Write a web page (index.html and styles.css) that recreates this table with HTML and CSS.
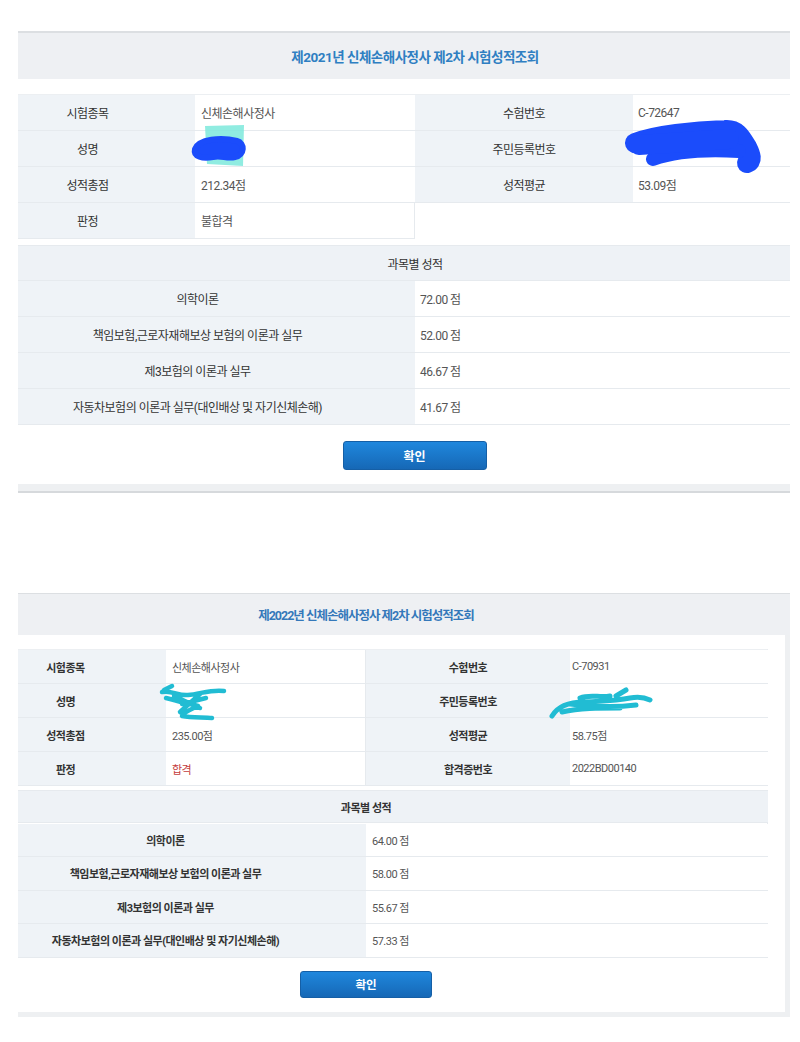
FILE: index.html
```html
<!DOCTYPE html>
<html lang="ko">
<head>
<meta charset="utf-8">
<title>시험성적조회</title>
<link rel="stylesheet" href="styles.css">
</head>
<body>
<div class="page">

  <section class="panel p1">
    <h2 class="panel-title">제2021년 신체손해사정사 제2차 시험성적조회</h2>
    <div class="panel-body">
      <div class="info">
        <div class="lbl first">시험종목</div>
        <div class="val">신체손해사정사</div>
        <div class="lbl">수험번호</div>
        <div class="val">C-72647</div>

        <div class="lbl first">성명</div>
        <div class="val mask">
          <svg class="scrib" width="70" height="50" viewBox="0 0 70 50">
            <polygon points="18,1 57,0 56,41 20,39" fill="#7ce9dc" opacity="0.85"/>
            <path d="M8 24 C 12 14, 34 12, 50 16 C 58 18, 58 30, 48 32 C 40 34, 34 30, 26 32 C 16 34, 6 32, 8 24 Z" fill="#1b4cfb" stroke="#1b4cfb" stroke-width="6" stroke-linejoin="round"/>
          </svg>
        </div>
        <div class="lbl">주민등록번호</div>
        <div class="val mask">
          <svg class="scrib wide" width="150" height="60" viewBox="0 0 150 60">
            <path d="M10 22 C 30 14, 70 10, 100 9 C 112 8, 116 16, 122 26 C 126 34, 128 40, 122 42" fill="none" stroke="#1b4cfb" stroke-width="20" stroke-linecap="round" stroke-linejoin="round"/>
            <path d="M28 38 C 50 30, 80 28, 114 30" fill="none" stroke="#1b4cfb" stroke-width="14" stroke-linecap="round"/>
            <path d="M14 24 L 104 18" fill="none" stroke="#1b4cfb" stroke-width="20" stroke-linecap="round"/>
          </svg>
        </div>

        <div class="lbl first">성적총점</div>
        <div class="val">212.34점</div>
        <div class="lbl">성적평균</div>
        <div class="val">53.09점</div>

        <div class="lbl first">판정</div>
        <div class="val last">불합격</div>
        <div class="empty"></div>
      </div>

      <div class="subjects">
        <div class="sub-head">과목별 성적</div>
        <div class="lbl">의학이론</div>
        <div class="val">72.00 점</div>
        <div class="lbl">책임보험,근로자재해보상 보험의 이론과 실무</div>
        <div class="val">52.00 점</div>
        <div class="lbl">제3보험의 이론과 실무</div>
        <div class="val">46.67 점</div>
        <div class="lbl">자동차보험의 이론과 실무(대인배상 및 자기신체손해)</div>
        <div class="val">41.67 점</div>
      </div>

      <div class="actions">
        <button class="btn" type="button">확인</button>
      </div>
    </div>
  </section>

  <section class="panel p2">
    <h2 class="panel-title">제2022년 신체손해사정사 제2차 시험성적조회</h2>
    <div class="panel-body">
      <div class="info">
        <div class="lbl first">시험종목</div>
        <div class="val">신체손해사정사</div>
        <div class="lbl">수험번호</div>
        <div class="val">C-70931</div>

        <div class="lbl first">성명</div>
        <div class="val mask">
          <svg class="scrib s2a" width="80" height="45" viewBox="0 0 80 45">
            <path d="M2 6 C 12 4, 18 10, 28 9 C 40 8, 52 3, 64 5 M6 12 C 20 16, 32 18, 38 20 C 30 24, 24 26, 22 30 C 32 32, 44 31, 52 32 M4 4 L 12 0 M22 18 L 46 12 M14 10 L 40 22 M40 8 L 20 26" fill="none" stroke="#21bcd3" stroke-width="4.5" stroke-linecap="round" stroke-linejoin="round"/>
          </svg>
        </div>
        <div class="lbl">주민등록번호</div>
        <div class="val mask">
          <svg class="scrib s2b" width="120" height="40" viewBox="0 0 120 40">
            <path d="M2 30 C 8 20, 18 16, 34 16 C 50 15, 66 15, 80 12 C 90 10, 96 12, 100 14 M20 18 C 40 20, 60 22, 86 19 M30 12 C 40 8, 50 12, 60 10 M66 10 L 76 4 M12 26 C 30 22, 48 22, 70 22" fill="none" stroke="#21bcd3" stroke-width="5" stroke-linecap="round" stroke-linejoin="round"/>
          </svg>
        </div>

        <div class="lbl first">성적총점</div>
        <div class="val">235.00점</div>
        <div class="lbl">성적평균</div>
        <div class="val">58.75점</div>

        <div class="lbl first">판정</div>
        <div class="val pass">합격</div>
        <div class="lbl">합격증번호</div>
        <div class="val">2022BD00140</div>
      </div>

      <div class="subjects">
        <div class="sub-head">과목별 성적</div>
        <div class="lbl">의학이론</div>
        <div class="val">64.00 점</div>
        <div class="lbl">책임보험,근로자재해보상 보험의 이론과 실무</div>
        <div class="val">58.00 점</div>
        <div class="lbl">제3보험의 이론과 실무</div>
        <div class="val">55.67 점</div>
        <div class="lbl">자동차보험의 이론과 실무(대인배상 및 자기신체손해)</div>
        <div class="val">57.33 점</div>
      </div>

      <div class="actions">
        <button class="btn" type="button">확인</button>
      </div>
    </div>
  </section>

</div>
</body>
</html>
```

FILE: styles.css
```css
* { box-sizing: border-box; }

html, body {
  margin: 0;
  padding: 0;
  background: #ffffff;
}

body {
  font-family: Roboto, "Noto Sans CJK KR", "Noto Sans", sans-serif;
  color: #333;
}

.page {
  padding: 31px 10px 0 18px;
}

.panel {
  width: 772px;
}

.panel-title {
  margin: 0;
  background: #eef0f3;
  border-top: 2px solid #dcdfe2;
  display: flex;
  align-items: center;
  justify-content: center;
  font-weight: 700;
  color: #2f7fc2;
}

/* ---------- panel 1 ---------- */
.p1 .panel-title {
  height: 48px;
  font-size: 13.5px;
  letter-spacing: -0.5px;
  padding-left: 22px;
}

.p1 .panel-body {
  padding-top: 15px;
  border-bottom: 7px solid #eef0f2;
  box-shadow: 0 2px 0 #d6d9dc;
}

.p1 .info {
  display: grid;
  grid-template-columns: 177px 220px 218px 157px;
  grid-auto-rows: 36px;
  border-top: 1px solid #eceff2;
}

.info .lbl,
.info .val,
.subjects .lbl,
.subjects .val,
.sub-head {
  display: flex;
  align-items: center;
  border-bottom: 1px solid #e6eaee;
}

.lbl {
  background: #eff3f7;
  justify-content: center;
  color: #333;
  text-align: center;
}

.val {
  background: #ffffff;
  color: #555;
  padding-left: 6px;
}

.p1 .lbl, .p1 .val {
  font-size: 12px;
  letter-spacing: -0.5px;
}

.p1 .info .lbl.first { padding-right: 38px; }
.p1 .subjects .lbl { padding-right: 38px; }

.p1 .info .val { padding-left: 6px; }
.p1 .info .val:nth-child(4n) { padding-left: 5px; }

.p1 .val.last {
  border-right: 1px solid #e6eaee;
}

.empty {
  background: #fff;
}

.mask {
  position: relative;
}

.scrib {
  position: absolute;
  overflow: visible;
  pointer-events: none;
}

.p1 .mask .scrib { left: -8px; top: -6px; }
.p1 .mask .scrib.wide { left: -8px; top: -10px; }

.sub-head {
  justify-content: center;
  background: #eef2f6;
  color: #333;
}

.p1 .subjects {
  margin-top: 6px;
  display: grid;
  grid-template-columns: 397px 375px;
  grid-auto-rows: 36px;
}

.p1 .sub-head {
  grid-column: 1 / -1;
  font-size: 12px;
  letter-spacing: -0.5px;
  border-top: 1px solid #e6eaee;
  padding-left: 22px;
}

.p1 .subjects .val { padding-left: 5px; }

.actions {
  display: flex;
  justify-content: center;
}

.btn {
  font-family: Roboto, "Noto Sans CJK KR", sans-serif;
  font-weight: 700;
  color: #fff;
  background: linear-gradient(#1f87dd, #1668b6);
  border: 1px solid #155fa6;
  border-radius: 3px;
  cursor: pointer;
}

.p1 .actions {
  padding: 16px 0 14px 21px;
}

.p1 .btn {
  width: 144px;
  height: 29px;
  font-size: 12px;
}

/* ---------- panel 2 ---------- */
.p2 {
  margin-top: 102px;
}

.p2 .panel-title {
  height: 42px;
  font-size: 12.5px;
  letter-spacing: -1px;
  border-top-width: 1px;
  color: #3478ba;
  padding-right: 76px;
}

.p2 .panel-body {
  padding: 14px 17px 0 0;
  border-right: 5px solid #eef0f2;
  border-bottom: 5px solid #eef0f2;
  background: #fff;
}

.p2 .info {
  display: grid;
  grid-template-columns: 148px 200px 204px 198px;
  grid-auto-rows: 34px;
  border-top: 1px solid #eceff2;
  border-right: 1px solid #e6eaee;
}

.p2 .lbl, .p2 .val, .p2 .sub-head {
  font-size: 11px;
  letter-spacing: -0.5px;
}

.p2 .lbl {
  font-weight: 700;
  color: #333;
}

.p2 .info .lbl.first { padding-right: 53px; }
.p2 .subjects .lbl { padding-right: 53px; }

.p2 .info .val { padding-left: 6px; }
.p2 .info .val:nth-child(4n) { padding-left: 2px; }
.p2 .info .val:nth-child(4n+2) { border-right: 1px solid #e6eaee; }

.p2 .val.pass {
  color: #c43d3d;
}

.p2 .mask .scrib.s2a { left: -6px; top: 2px; }
.p2 .mask .scrib.s2b { left: -20px; top: 2px; }

.p2 .subjects {
  margin-top: 4px;
  display: grid;
  grid-template-columns: 348px 402px;
  grid-auto-rows: 33.5px;
  border-right: 1px solid #e6eaee;
}

.p2 .sub-head {
  grid-column: 1 / -1;
  height: 33px;
  font-weight: 700;
  border-top: 1px solid #e6eaee;
  padding-right: 54px;
}

.p2 .subjects .val { padding-left: 6px; }

.p2 .actions {
  padding: 13px 54px 14px 0;
}

.p2 .btn {
  width: 132px;
  height: 27px;
  font-size: 11.5px;
}
```
